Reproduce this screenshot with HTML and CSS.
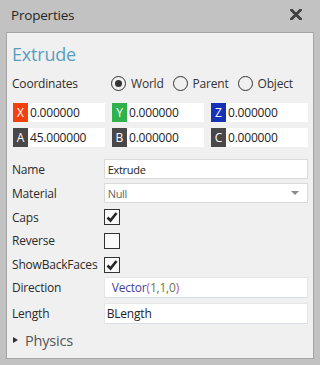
FILE: index.html
```html
<!DOCTYPE html>
<html>
<head>
<meta charset="utf-8">
<link rel="stylesheet" href="styles.css">
</head>
<body>
<div class="window">
  <div class="titlebar">
    <span class="title">Properties</span>
    <svg class="close" width="12" height="11" viewBox="0 0 12 11"><path d="M1.5 1 L10.5 10 M10.5 1 L1.5 10" stroke="#3e3e3e" stroke-width="2.8" stroke-linecap="square"/></svg>
  </div>
  <div class="panel">
    <div class="heading">Extrude</div>
    <div class="coords-row">
      <span class="label">Coordinates</span>
      <div class="radios">
        <label class="radio"><span class="circle checked"></span>World</label>
        <label class="radio"><span class="circle"></span>Parent</label>
        <label class="radio"><span class="circle"></span>Object</label>
      </div>
    </div>
    <div class="coord-grid">
      <div class="cfield"><span class="tag tx">X</span><span class="val">0.000000</span></div>
      <div class="cfield"><span class="tag ty">Y</span><span class="val">0.000000</span></div>
      <div class="cfield"><span class="tag tz">Z</span><span class="val">0.000000</span></div>
      <div class="cfield"><span class="tag tg">A</span><span class="val">45.000000</span></div>
      <div class="cfield"><span class="tag tg">B</span><span class="val">0.000000</span></div>
      <div class="cfield"><span class="tag tg">C</span><span class="val">0.000000</span></div>
    </div>
    <div class="props">
      <div class="prow r24"><span class="label">Name</span><div class="input small">Extrude</div></div>
      <div class="prow r24"><span class="label">Material</span><div class="input small select"><span class="muted">Null</span><span class="arrow"></span></div></div>
      <div class="prow r24"><span class="label">Caps</span><span class="check"><svg width="14" height="14" viewBox="0 0 14 14"><path d="M2.5 7.5 L5.5 10.5 L11.5 3" fill="none" stroke="#262626" stroke-width="2.6"/></svg></span></div>
      <div class="prow r23"><span class="label">Reverse</span><span class="check"></span></div>
      <div class="prow r25"><span class="label">ShowBackFaces</span><span class="check"><svg width="14" height="14" viewBox="0 0 14 14"><path d="M2.5 7.5 L5.5 10.5 L11.5 3" fill="none" stroke="#262626" stroke-width="2.6"/></svg></span></div>
      <div class="prow r21"><span class="label">Direction</span><div class="input expr"><span class="fn">Vector</span><span class="par">(</span><span class="num">1,1,0</span><span class="par">)</span></div></div>
      <div class="prow r21 mt5"><span class="label">Length</span><div class="input expr2">BLength</div></div>
      <div class="section"><span class="tri"></span><span class="sect-label">Physics</span></div>
    </div>
  </div>
</div>
</body>
</html>
```
FILE: styles.css
```css
* { box-sizing: border-box; }
html, body { margin: 0; padding: 0; }
body {
  background: #c2c2c2;
  font-family: "Open Sans", "Noto Sans", sans-serif;
  color: #2b2b2b;
  width: 320px;
  height: 365px;
  overflow: hidden;
}
.window { width: 320px; height: 365px; display: flex; flex-direction: column; }
.titlebar {
  height: 32px;
  display: flex;
  align-items: center;
  justify-content: space-between;
  padding: 0 18px 0 11px;
}
.title { font-size: 13.5px; color: #262626; margin-top: -2px; letter-spacing: -0.2px; }
.close { margin-top: -4px; }
.panel {
  margin: 0 6px;
  height: 327px;
  background: #f0f0f0;
  border: 1px solid #a4a4a4;
  padding: 9px 5px 0 5px;
}
.heading {
  font-size: 18px;
  line-height: 24px;
  color: #5a9ebd;
  letter-spacing: -0.2px;
}
.label { font-size: 12px; color: #2b2b2b; letter-spacing: -0.2px; }
.coords-row {
  display: flex;
  align-items: center;
  height: 22px;
  margin-top: 6px;
}
.coords-row .label { width: 99px; }
.radios { display: flex; gap: 0; }
.radio {
  display: flex;
  align-items: center;
  font-size: 12px;
  color: #333;
  letter-spacing: -0.2px;
}
.radio + .radio { margin-left: 9px; }
.circle {
  width: 15px; height: 15px;
  border: 1px solid #333;
  border-radius: 50%;
  margin-right: 5px;
  position: relative;
  display: inline-block;
}
.circle.checked::after {
  content: "";
  position: absolute;
  left: 3px; top: 3px;
  width: 7px; height: 7px;
  border-radius: 50%;
  background: #333;
}
.coord-grid {
  display: grid;
  grid-template-columns: 92px 92px 97px;
  grid-auto-rows: 19px;
  column-gap: 7px;
  row-gap: 6px;
  margin-top: 9px;
  margin-left: 1px;
}
.cfield { display: flex; background: #fff; align-items: stretch; }
.tag {
  width: 15px;
  color: #fff;
  font-size: 12px;
  display: flex; align-items: center; justify-content: center;
}
.tx { background: #f2400e; }
.ty { background: #2fb14b; }
.tz { background: #1632b5; }
.tg { background: #484848; }
.val {
  font-size: 12px;
  color: #222;
  padding-left: 2px;
  display: flex; align-items: center;
  letter-spacing: -0.2px;
}
.props { margin-top: 10px; display: flex; flex-direction: column; }
.prow { display: flex; align-items: center; }
.prow .label { width: 92px; }
.r24 { height: 24px; }
.r23 { height: 23px; }
.r25 { height: 25px; }
.r21 { height: 21px; }
.mt5 { margin-top: 5px; }
.input {
  width: 205px;
  height: 20px;
  background: #fff;
  border: 1px solid #dadada;
  display: flex;
  align-items: center;
  padding-left: 3px;
  font-size: 11px;
  color: #222;
  letter-spacing: -0.3px;
}
.input.select { justify-content: space-between; padding-right: 8px; }
.muted { color: #666; }
.arrow {
  width: 0; height: 0;
  border-left: 4px solid transparent;
  border-right: 4px solid transparent;
  border-top: 4px solid #8a8a8a;
}
.check {
  width: 16px; height: 16px;
  border: 1px solid #333;
  background: #fafafa;
  display: flex; align-items: center; justify-content: center;
}
.input.expr, .input.expr2 {
  height: 21px;
  border: 1px solid #e6e6e6;
  border-bottom-color: #d8dde6;
  font-size: 12px;
  letter-spacing: -0.2px;
}
.input.expr { padding-left: 7px; }
.input.expr2 { padding-left: 2px; color: #222; }
.fn { color: #3f3f9c; }
.par { color: #b54ab5; }
.num { color: #6b7a3a; }
.section {
  height: 32px;
  display: flex;
  align-items: center;
}
.tri {
  width: 0; height: 0;
  border-top: 3.5px solid transparent;
  border-bottom: 3.5px solid transparent;
  border-left: 5px solid #333;
  margin-left: 1px;
  margin-right: 7px;
}
.sect-label { font-size: 14.5px; color: #555; letter-spacing: -0.2px; }
```
